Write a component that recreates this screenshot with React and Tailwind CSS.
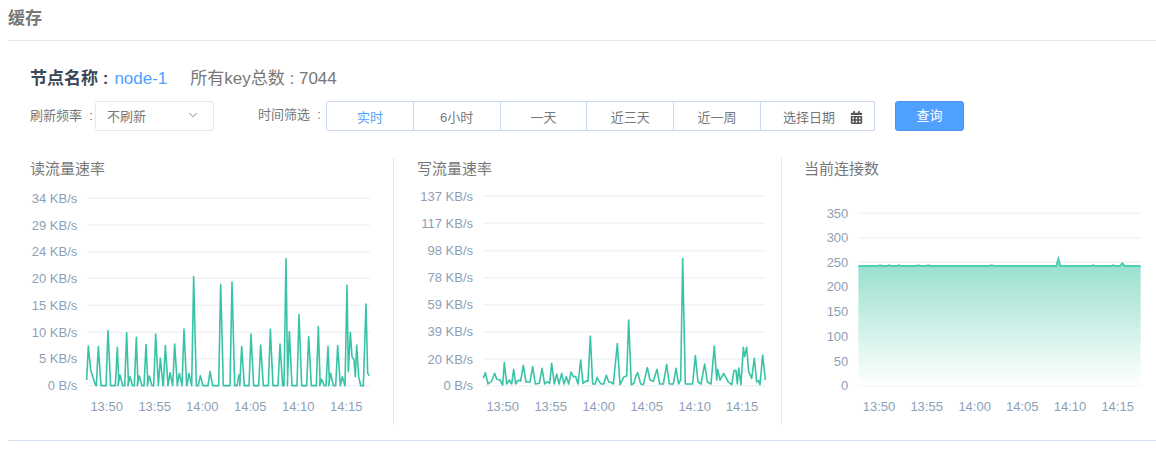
import { ChevronDown } from 'lucide-react';
import { FaCalendarAlt } from 'react-icons/fa';

const BASE = 617;
const TIMES = ['13:50', '13:55', '14:00', '14:05', '14:10', '14:15'];

// all chart coordinates below were read off at 3x, so divide by 3 when drawing
const scale = (pts) => pts.map(([x, y]) => `${x / 3},${y / 3}`).join(' ');

// spikes that fall back to the baseline unless the next one is very close
const spikes = (peaks) => {
  const out = [];
  peaks.forEach(([x, y], i) => {
    const next = peaks[i + 1];
    out.push([x - 6, BASE], [x, y]);
    if (next && next[0] - x < 12) out.push([x + (next[0] - x) / 2, 598]);
    else out.push([x + 8, BASE]);
  });
  return out;
};

const readPts = [
  [200, 600], [205, 498], [212, 570], [225, 612], [229, BASE],
  ...spikes([
    [235, 500], [264, 452], [292, 502], [300, 585], [320, 458], [330, 590], [349, 472], [358, 588], [378, 494], [388, 588],
    [407, 462], [421, 535], [436, 497], [450, 578], [464, 492], [478, 580], [492, 447], [507, 580], [521, 290],
    [541, 587], [570, 575], [602, 313], [636, 306], [657, 585], [665, 500], [693, 462], [722, 495], [751, 448],
    [780, 492], [798, 236], [808, 455], [837, 404], [866, 470], [895, 440], [905, 598], [924, 500], [932, 580],
    [953, 497], [967, 590], [981, 316],
  ]).filter(([x]) => x < 985),
  [985, 575], [991, 457], [996, 530], [1002, 540], [1006, 590], [1010, 495], [1016, 590], [1022, BASE], [1030, BASE],
  [1038, 372], [1043, 580], [1048, 587],
];

const writePts = [
  [250, 595], [256, 578], [264, 612], [275, 603], [284, 580], [290, 598], [300, 600], [308, 615], [313, 548], [320, 612],
  [328, 600], [335, 612], [341, 568], [347, 612], [355, 600], [362, 603], [370, 556], [378, 606], [390, 606], [398, 560],
  [406, 612], [418, 610], [426, 565], [434, 612], [442, 605], [449, 610], [455, 550], [463, 612], [470, 582], [477, 612],
  [485, 580], [492, 612], [499, 590], [506, 612], [513, 576], [520, 590], [527, 590], [534, 612], [542, 540], [549, 610],
  [560, 602], [564, 604], [571, 468], [578, 612], [586, 612], [591, 592], [598, 606], [604, 612], [611, 612], [619, 586],
  [626, 606], [632, 606], [640, 612], [652, 491], [660, 614], [672, 590], [680, 588], [686, 420], [694, 614], [702, 610],
  [707, 590], [713, 578], [722, 612], [730, 614], [742, 563], [750, 600], [760, 604], [771, 568], [779, 612], [790, 612],
  [800, 553], [808, 612], [820, 612], [828, 565], [836, 612], [842, 600], [848, 236], [856, 612], [870, 612], [878, 612],
  [886, 527], [894, 606], [903, 612], [914, 552], [922, 606], [933, 612], [943, 498], [950, 600], [953, 568], [960, 600],
  [971, 580], [985, 606], [995, 614], [1002, 572], [1008, 572], [1012, 612], [1016, 564], [1023, 614], [1030, 502],
  [1034, 530], [1040, 502], [1046, 575], [1055, 595], [1063, 535], [1070, 606], [1076, 602], [1080, 614], [1088, 525],
  [1096, 600],
];

const connPts = [
  [205, 258], [264, 258], [270, 256], [276, 258], [292, 258], [298, 256], [304, 258], [321, 258], [327, 256], [333, 258],
  [379, 258], [385, 256], [391, 258], [409, 258], [415, 256], [421, 258], [598, 258], [605, 256], [612, 258],
  [799, 258], [805, 237], [811, 258], [904, 258], [910, 256], [916, 258], [964, 258], [970, 256], [976, 258],
  [990, 258], [997, 250], [1004, 258], [1052, 258],
];

const Chart = ({ yLabels, gridY, x0, x1, labelX, timeX, height, children }) => (
  <svg width={366} height={height} className="block shrink-0 text-[13px]">
    {gridY.map((y, i) => (
      <g key={yLabels[i]}>
        <line x1={x0 / 3} x2={x1 / 3} y1={y / 3} y2={y / 3} className="stroke-[#eff3f9] stroke-[1.5]" />
        <text x={labelX / 3} y={y / 3} textAnchor="end" dominantBaseline="central" className="fill-[#8d9fb8]">
          {yLabels[i]}
        </text>
      </g>
    ))}
    {children}
    {TIMES.map((t, i) => (
      <text key={t} x={timeX[i] / 3} y={226} textAnchor="middle" dominantBaseline="central" className="fill-[#8d9fb8]">
        {t}
      </text>
    ))}
  </svg>
);

const Line = ({ pts }) => (
  <polyline points={scale(pts)} fill="none" className="stroke-[#22bd9c] stroke-[1.6] opacity-90" strokeLinejoin="round" />
);

const TABS = ['实时', '6小时', '一天', '近三天', '近一周'];

export default function App() {
  return (
    <div className="h-[450px] w-[1156px] overflow-hidden bg-white pl-2 font-['Liberation_Sans','Noto_Sans_CJK_SC',sans-serif]">
      {/* Title */}
      <div className="h-10 border-b border-[#e3e8ef] box-content">
        <h2 className="pt-[7px] text-[17px] leading-6 font-bold text-[#777]">缓存</h2>
      </div>

      {/* Node info */}
      <div className="mt-[26px] flex h-6 items-center whitespace-pre pl-[22px] text-[17px] leading-6">
        <span className="font-bold text-[#3b4859]">节点名称 :</span>
        <span className="ml-[6px] text-[#4da1ff]">node-1</span>
        <span className="ml-[23px] text-[#777]">所有key总数 : 7044</span>
      </div>

      {/* Filters */}
      <div className="mt-[10px] flex h-[30px] items-center whitespace-pre pl-[22px] text-[13px] text-[#777]">
        <span className="w-[65px] -mt-[1px]">刷新频率  :</span>
        <div className="flex h-[30px] w-[119px] items-center justify-between rounded-[3px] border border-[#e4e7ed] pr-[13px] pl-[11px] pt-[1px]">
          不刷新
          <ChevronDown className="h-[14px] w-[14px] -mt-[4px] text-[#777]" strokeWidth={1.5} />
        </div>
        <span className="ml-[44px] w-[68px] -mt-[3px]">时间筛选  :</span>
        <div className="flex h-[30px] w-[549px] rounded-[2px] border border-[#ccdaf0]">
          {TABS.map((tab, i) => (
            <div
              key={tab}
              className={`flex w-[86.8px] items-center justify-center border-r border-[#ccdaf0] pt-[3px] ${i === 0 ? 'text-[#4da1ff]' : ''}`}
            >
              {tab}
            </div>
          ))}
          <div className="flex flex-1 items-center justify-between pr-[11px] pl-[22px] pt-[3px]">
            选择日期
            <FaCalendarAlt className="h-[13px] w-[13px] text-[#555]" />
          </div>
        </div>
        <button className="ml-5 h-[30px] w-[69px] rounded-[3px] border border-[#4a94ee] bg-[#50a0ff] text-white">
          查询
        </button>
      </div>

      {/* Charts */}
      <div className="mt-[27px] flex h-[267px] w-[1148px]">
        <div className="w-[386px] shrink-0 border-r border-[#e4e8ee]">
          <h3 className="pl-[22px] text-[15px] leading-[22px] font-normal text-[#777]">读流量速率</h3>
          <div className="pl-3">
            <Chart
              height={245}
              x0={201}
              x1={1050}
              labelX={172}
              gridY={[55, 135, 215, 295, 376, 457, 536, 617]}
              yLabels={['34 KB/s', '29 KB/s', '24 KB/s', '20 KB/s', '15 KB/s', '10 KB/s', '5 KB/s', '0 B/s']}
              timeX={[260, 404, 547, 691, 835, 979]}
            >
              <Line pts={readPts} />
            </Chart>
          </div>
        </div>

        <div className="w-[388px] shrink-0 border-r border-[#e4e8ee]">
          <h3 className="pl-[23px] text-[15px] leading-[22px] font-normal text-[#777]">写流量速率</h3>
          <div className="pl-[6px]">
            <Chart
              height={245}
              x0={250}
              x1={1097}
              labelX={219}
              gridY={[48, 130, 212, 293, 374, 455, 537, 617]}
              yLabels={['137 KB/s', '117 KB/s', '98 KB/s', '78 KB/s', '59 KB/s', '39 KB/s', '20 KB/s', '0 B/s']}
              timeX={[308, 452, 596, 740, 884, 1026]}
            >
              <Line pts={writePts} />
            </Chart>
          </div>
        </div>

        <div className="flex-1">
          <h3 className="pl-[22px] text-[15px] leading-[22px] font-normal text-[#777]">当前连接数</h3>
          <div className="pl-2">
            <Chart
              height={245}
              x0={205}
              x1={1054}
              labelX={175}
              gridY={[100, 173, 247, 320, 395, 470, 543, 617]}
              yLabels={['350', '300', '250', '200', '150', '100', '50', '0']}
              timeX={[267, 410, 554, 697, 840, 983]}
            >
              <defs>
                <linearGradient id="connFill" x1="0" y1="0" x2="0" y2="1">
                  <stop offset="0%" stopColor="#8fddca" />
                  <stop offset="100%" stopColor="#ffffff" />
                </linearGradient>
              </defs>
              <polygon points={scale([...connPts, [1052, 617], [205, 617]])} fill="url(#connFill)" fillOpacity="0.95" />
              <polyline points={scale(connPts)} fill="none" className="stroke-[#4fcfb2] stroke-2" />
            </Chart>
          </div>
        </div>
      </div>

      <div className="mt-[15px] w-[1148px] border-t border-[#d5e0f0]" />
    </div>
  );
}
